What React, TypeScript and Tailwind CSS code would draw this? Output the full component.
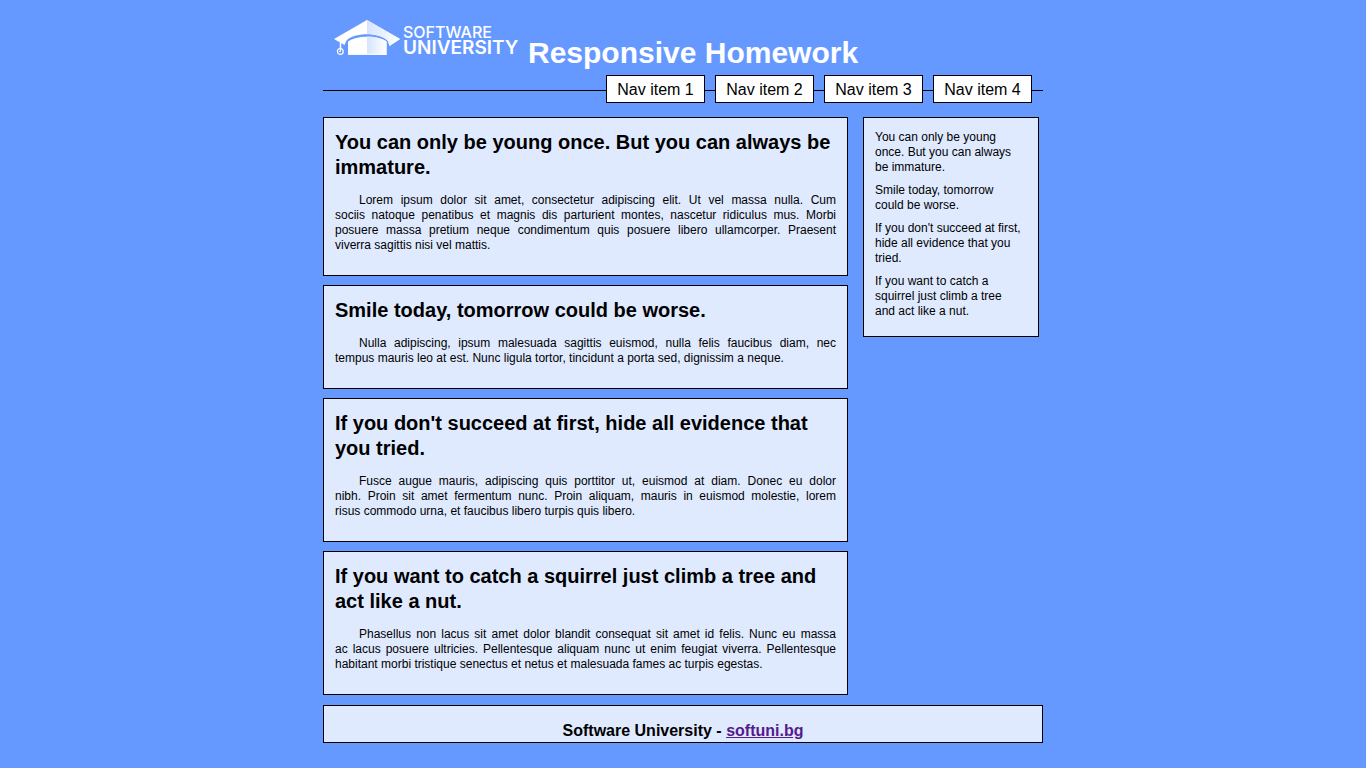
const articles = [
  {
    title: "You can only be young once. But you can always be immature.",
    body: "Lorem ipsum dolor sit amet, consectetur adipiscing elit. Ut vel massa nulla. Cum sociis\u00a0natoque penatibus et magnis dis parturient montes, nascetur ridiculus mus. Morbi posuere\u00a0massa pretium neque condimentum quis posuere libero ullamcorper. Praesent viverra\u00a0sagittis nisi vel mattis.",
  },
  {
    title: "Smile today, tomorrow could be worse.",
    body: "Nulla adipiscing, ipsum malesuada sagittis euismod, nulla felis faucibus diam, nec tempus\u00a0mauris leo at est. Nunc ligula tortor, tincidunt a porta sed, dignissim a neque.",
  },
  {
    title: "If you don't succeed at first, hide all evidence that you tried.",
    body: "Fusce augue mauris, adipiscing quis porttitor ut, euismod at diam. Donec eu dolor nibh.\u00a0Proin sit amet fermentum nunc. Proin aliquam, mauris in euismod molestie, lorem risus\u00a0commodo urna, et faucibus libero turpis quis libero.",
  },
  {
    title: "If you want to catch a squirrel just climb a tree and act like a nut.",
    body: "Phasellus non lacus sit amet dolor blandit consequat sit amet id felis. Nunc eu massa ac\u00a0lacus posuere ultricies. Pellentesque aliquam nunc ut enim feugiat viverra. Pellentesque habitant morbi tristique senectus et netus et malesuada fames ac turpis egestas.",
  },
];

const navItems = ["Nav item 1", "Nav item 2", "Nav item 3", "Nav item 4"];

function Logo() {
  return (
    <div className="flex w-[184px] items-start gap-[3px] text-white">
      <svg className="shrink-0" width="66" height="36" viewBox="0 0 66 36" aria-hidden="true">
        <defs>
          <linearGradient id="fold" x1="0" x2="1" y1="0" y2="0">
            <stop offset="0" stopColor="#d6e4ff" />
            <stop offset="1" stopColor="#ffffff" />
          </linearGradient>
        </defs>
        <path d="M33 0 L66 19 L55.500 26 L54 21 C46 12 20 12 12.500 20.500 L10.500 25 L0 19 Z" fill="#fff" />
        <path d="M33 0 L66 19 L55.500 26 L54 21 C49 16 41 14 33 14 Z" fill="url(#fold)" />
        <path d="M14 34.700 V21.500 C22 15 44 15 52.500 21.500 V34.700 Z" fill="#fff" />
        <path d="M33 16.500 C41 16.500 48 18 52.500 21.500 V34.700 H33 Z" fill="url(#fold)" />
        <path d="M14 34.200 H52.500" stroke="#fff" />
        <path d="M6.500 21 V28.500" stroke="#fff" strokeWidth="1.500" />
        <circle cx="6.300" cy="31.500" r="2.900" fill="none" stroke="#fff" strokeWidth="1.200" />
        <path d="M6.500 28 V31.500 H5" fill="none" stroke="#fff" />
      </svg>
      <div className="pt-[5px] font-['Inter','Open_Sans',sans-serif]">
        <div className="text-base leading-[15px] font-medium">SOFTWARE</div>
        <div className="text-[19px] leading-[15px] font-semibold">UNIVERSITY</div>
      </div>
    </div>
  );
}

export default function App() {
  return (
    <div className="min-h-screen bg-[#6699ff] pt-5 pb-6 font-['Liberation_Sans',Arial,sans-serif] text-black">
      <div className="mx-auto w-full max-w-[720px]">
        <header>
          <div className="flex h-[55px] items-start gap-[10px] pl-[11px]">
            <Logo />
            <h1 className="pt-[17px] text-[30px] leading-8 font-bold text-white">Responsive Homework</h1>
          </div>
          <nav className="flex items-center" aria-label="Main">
            <span className="h-[3px] flex-1 border-b border-black" />
            <ul className="flex">
              {navItems.map((item) => (
                <li key={item} className="group flex items-center">
                  <a href="#" className="w-[99px] border border-black bg-white pt-[3px] pb-px text-center text-base leading-[22px] hover:bg-[#dfeaff]">
                    {item}
                  </a>
                  <span className="h-[3px] w-[10px] border-b border-black group-last:w-[11px]" />
                </li>
              ))}
            </ul>
          </nav>
        </header>

        <div className="mt-[14px] flex items-start gap-[15px]">
          <main className="flex flex-1 flex-col gap-[9px]">
            {articles.map((article) => (
              <article key={article.title} className="border border-black bg-[#dfeaff] px-[11px] pt-3 pb-[22px]">
                <h2 className="text-xl leading-[25px] font-bold">{article.title}</h2>
                <p className="mt-[13px] indent-6 text-justify text-xs leading-[15px]">{article.body}</p>
              </article>
            ))}
          </main>
          <aside className="mr-1 w-44 border border-black bg-[#dfeaff] pt-3 pr-4 pb-[17px] pl-[11px]">
            <ul className="flex flex-col gap-2 text-xs leading-[15px]">
              {articles.map((article) => (
                <li key={article.title}>{article.title}</li>
              ))}
            </ul>
          </aside>
        </div>

        <footer className="mt-[10px] border border-black bg-[#dfeaff] pt-[15px] pb-0.5 text-center text-base leading-[19px] font-bold">
          Software University -{" "}
          <a href="https://softuni.bg" className="text-[#551a8b] underline">
            softuni.bg
          </a>
        </footer>
      </div>
    </div>
  );
}
